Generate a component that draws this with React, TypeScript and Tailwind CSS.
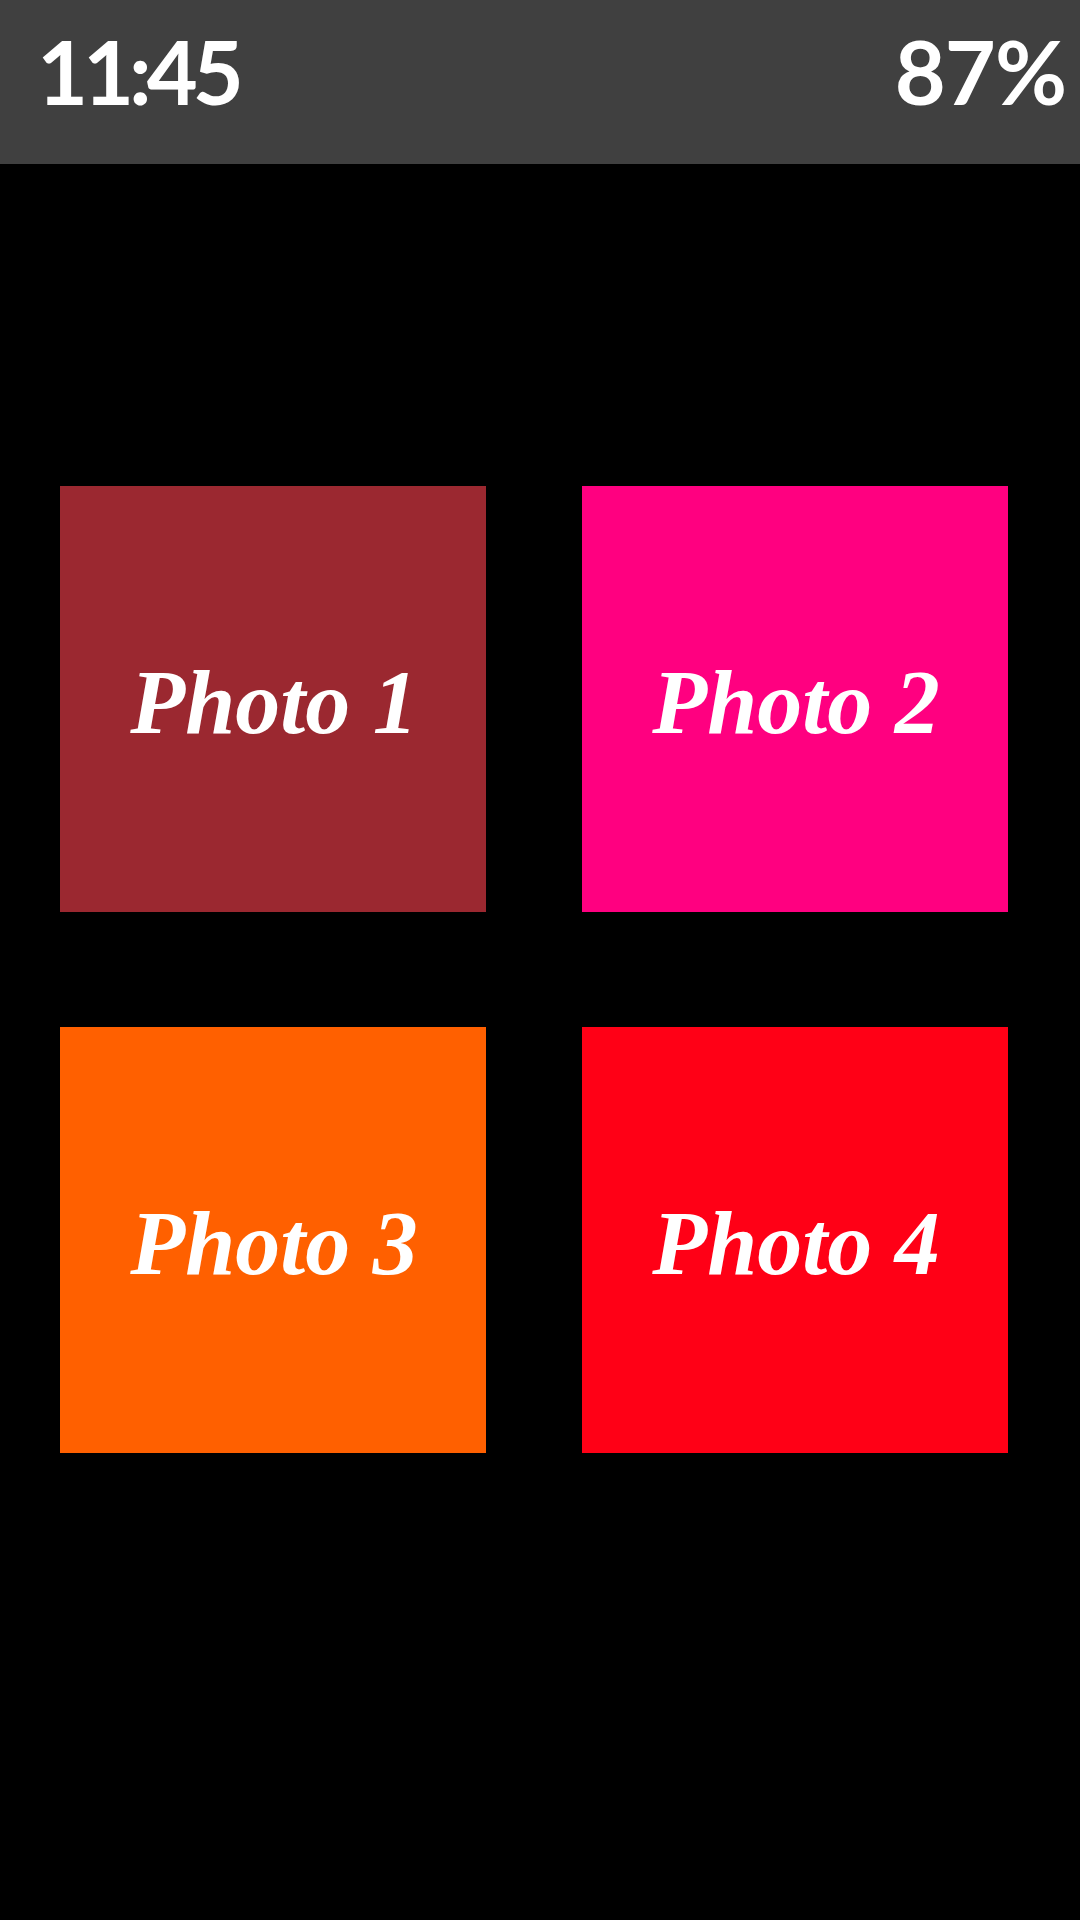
import React from "react";

const tiles = [
  { label: "Photo 1", bg: "bg-[#9b2830]" },
  { label: "Photo 2", bg: "bg-[#ff0080]" },
  { label: "Photo 3", bg: "bg-[#ff6000]" },
  { label: "Photo 4", bg: "bg-[#ff0016]" },
];

export default function App() {
  return (
    <div className="w-[1080px] h-[1920px] bg-black flex flex-col overflow-hidden">
      <div className="h-[164px] bg-[#404040] flex items-start justify-between pl-[37px] pr-[14px] pt-[27px] text-white font-['Lato','Open_Sans',sans-serif] font-bold text-[88px] leading-none">
        <span className="tracking-[-5px]">11:45</span>
        <span className="tracking-[-1px]">87%</span>
      </div>
      <div className="pt-[322px] pl-[60px] grid grid-cols-[426px_426px] gap-x-[96px] gap-y-[115px]">
        {tiles.map((t) => (
          <div
            key={t.label}
            className={`${t.bg} w-[426px] h-[426px] flex items-center justify-center`}
          >
            <span className="text-white italic font-bold text-[90px] leading-none font-['Liberation_Serif','DejaVu_Serif',serif] pt-[8px] pl-[2px]">
              {t.label}
            </span>
          </div>
        ))}
      </div>
    </div>
  );
}
